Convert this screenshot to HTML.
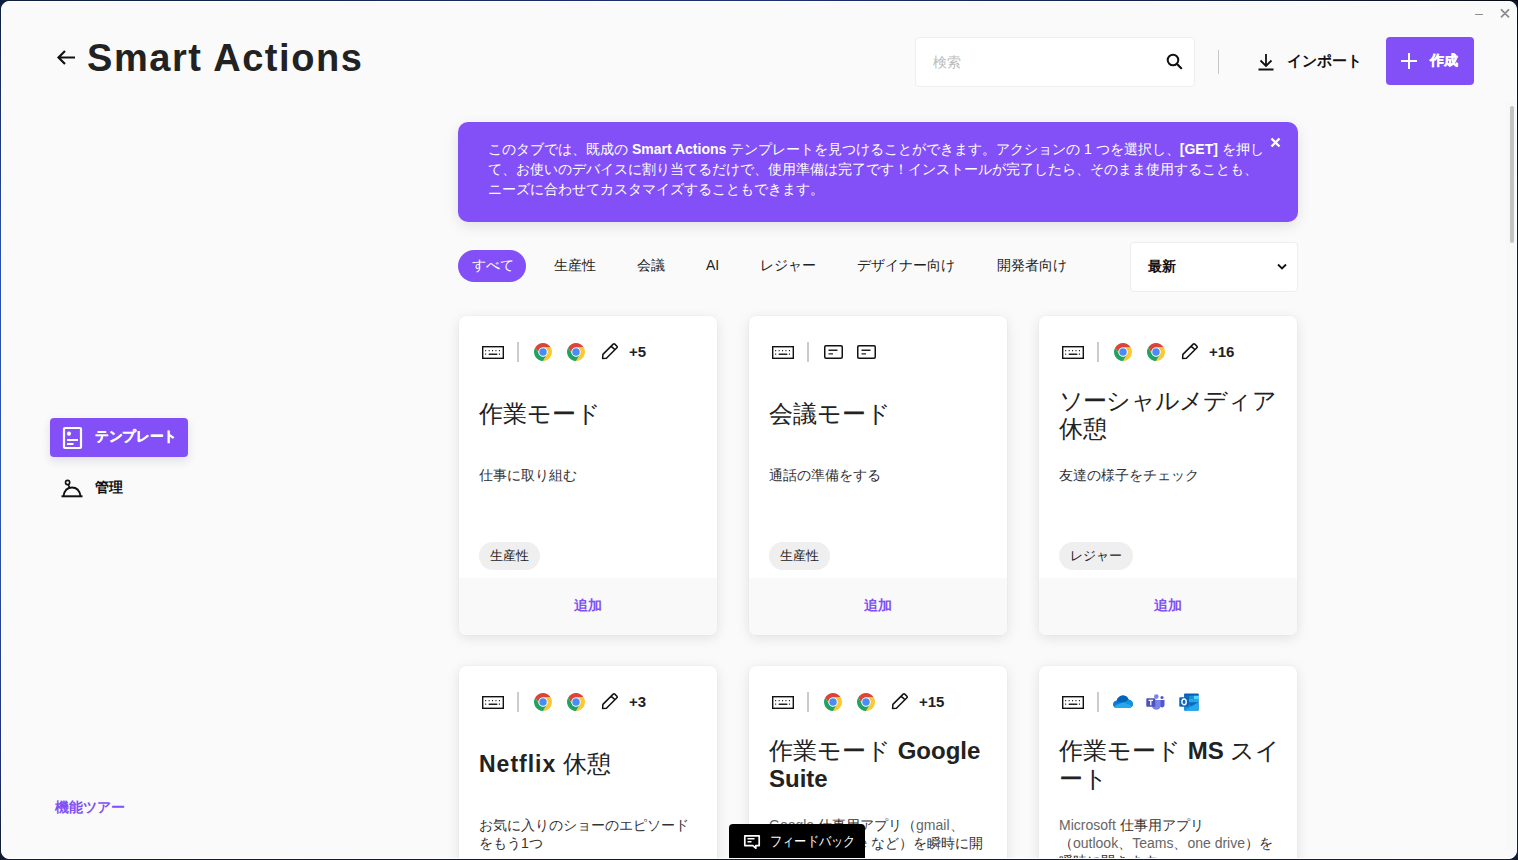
<!DOCTYPE html>
<html><head><meta charset="utf-8">
<style>
*{box-sizing:border-box;margin:0;padding:0}
html,body{width:1518px;height:860px;overflow:hidden;background:#111c38;font-family:"Liberation Sans",sans-serif;color:#222}
#bg{position:absolute;left:1px;top:1px;width:1516px;height:858px;background:#fafafa;border-radius:8px;border:1px solid #fff}
#win{position:absolute;left:0;top:0;width:1517px;height:858px;overflow:hidden}
.abs{position:absolute;white-space:nowrap}
.title{left:87px;top:36px;font-size:38px;font-weight:bold;color:#222;line-height:44px;letter-spacing:1.55px}
.search{left:915px;top:37px;width:280px;height:50px;background:#fff;border:1px solid #eeeeee;border-radius:4px}
.create{left:1386px;top:37px;width:88px;height:48px;background:#8350f8;border-radius:4px}
.banner{left:458px;top:122px;width:840px;height:100px;background:#8350f8;border-radius:10px;box-shadow:0 4px 14px rgba(0,0,0,.10)}
.btext{left:488px;top:139px;font-size:14px;line-height:20px;color:#fff}
.chip{left:458px;top:250px;width:68px;height:32px;background:#8350f8;border-radius:16px}
.ftxt{top:255px;font-size:14px;line-height:20px;color:#222}
.sort{left:1130px;top:242px;width:168px;height:50px;background:#fff;border:1px solid #eee;border-radius:4px}
.card{position:absolute;width:258px;height:319px;background:#fff;border-radius:7px;box-shadow:0 0 2px rgba(0,0,0,.05),0 3px 13px rgba(0,0,0,.10);overflow:hidden}
.card .foot{position:absolute;left:0;top:262px;width:100%;height:57px;background:#f9f9f9}
.card .add{position:absolute;left:0;top:279px;width:100%;text-align:center;font-size:14px;font-weight:bold;color:#8350f8;line-height:20px}
.card .ct{position:absolute;left:20px;top:82px;font-size:24px;line-height:28px;color:#222;white-space:nowrap}
.card .cd{position:absolute;left:20px;top:150px;font-size:14px;line-height:18px;color:#333;white-space:nowrap}
.card .tag{position:absolute;left:20px;top:226px;height:28px;padding:0 11px;border-radius:14px;background:#efefef;font-size:13px;line-height:28px;color:#222}
.lt{color:#666}
.card .icons{position:absolute;left:0;top:0;width:100%;height:60px}
.card .icons svg{position:absolute}
.card .cnt{position:absolute;top:27px;font-size:15px;font-weight:bold;line-height:18px;color:#222}
.navsel{left:50px;top:418px;width:138px;height:39px;background:#8350f8;border-radius:4px;box-shadow:0 4px 10px rgba(50,50,120,.13)}
.fb{left:729px;top:824px;width:136px;height:40px;background:#000;border-radius:4px}
</style></head><body>
<div class="abs" style="left:0;top:0;width:1518px;height:1px;background:linear-gradient(90deg,#0f1e3c,#1a2d6c 40%,#1b2f72 50%,#13204a 75%,#070b14)"></div>
<div class="abs" style="left:0;top:0;width:1px;height:860px;background:linear-gradient(180deg,#0f1e3c,#2a4fae 30%,#2c52b0 60%,#1c2f70 90%,#101828)"></div>
<div class="abs" style="left:1517px;top:0;width:1px;height:860px;background:linear-gradient(180deg,#070b14,#1a1f28 40%,#1a1f28)"></div>
<div class="abs" style="left:0;top:859px;width:1518px;height:1px;background:linear-gradient(90deg,#141a30,#16181f 40%,#1a1d2e)"></div>
<div id="bg"></div>
<div id="win">
  <!-- header -->
  <svg class="abs" style="left:56px;top:49px" width="21" height="17" viewBox="0 0 21 17"><path d="M9 2 L2.5 8.5 L9 15 M2.5 8.5 H19" fill="none" stroke="#111" stroke-width="2.2"/></svg>
  <div class="abs title">Smart Actions</div>
  <div class="abs search"></div>
  <div class="abs" style="left:933px;top:52px;font-size:14px;line-height:20px;color:#bbb">検索</div>
  <svg class="abs" style="left:1166px;top:53px" width="17" height="17" viewBox="0 0 17 17"><circle cx="7" cy="7" r="5.3" fill="none" stroke="#111" stroke-width="2"/><path d="M10.8 10.8 L15.2 15.2" stroke="#111" stroke-width="2.2" stroke-linecap="round"/></svg>
  <div class="abs" style="left:1218px;top:50px;width:1px;height:24px;background:#c6c6c6"></div>
  <svg class="abs" style="left:1257px;top:53px" width="18" height="18" viewBox="0 0 18 18"><path d="M9 1 V13 M3.5 7.5 L9 13 L14.5 7.5 M1.5 16.5 H16.5" fill="none" stroke="#111" stroke-width="1.8"/></svg>
  <div class="abs" style="left:1287px;top:51px;font-size:15px;font-weight:bold;line-height:20px;color:#111">インポート</div>
  <div class="abs create"></div>
  <svg class="abs" style="left:1401px;top:53px" width="16" height="16" viewBox="0 0 16 16"><path d="M8 0 V16 M0 8 H16" stroke="#fff" stroke-width="2"/></svg>
  <div class="abs" style="left:1430px;top:50px;font-size:14px;font-weight:bold;line-height:20px;color:#fff;-webkit-text-stroke:0.35px #fff">作成</div>
  <!-- window controls -->
  <div class="abs" style="left:1475px;top:13.5px;width:8px;height:1.6px;background:#8c8c8c;border-radius:1px"></div>
  <svg class="abs" style="left:1500px;top:8px" width="10" height="10" viewBox="0 0 10 10"><path d="M1.5 1.8 L8.5 8.8 M8.5 1.8 L1.5 8.8" stroke="#8c8c8c" stroke-width="1.8" stroke-linecap="round"/></svg>
  <!-- scrollbar -->
  <div class="abs" style="left:1506px;top:102px;width:10px;height:748px;background:#f8f8f8"></div><div class="abs" style="left:1510px;top:106px;width:4px;height:137px;background:#c4c4c4;border-radius:2px"></div>

  <!-- banner -->
  <div class="abs banner"></div>
  <div class="abs btext">このタブでは、既成の <b>Smart Actions</b> テンプレートを見つけることができます。アクションの 1 つを選択し、<b>[GET]</b> を押し<br>て、お使いのデバイスに割り当てるだけで、使用準備は完了です！インストールが完了したら、そのまま使用することも、<br>ニーズに合わせてカスタマイズすることもできます。</div>
  <svg class="abs" style="left:1270px;top:137px" width="11" height="11" viewBox="0 0 11 11"><path d="M1.5 1.5 L9.5 9.5 M9.5 1.5 L1.5 9.5" stroke="#fff" stroke-width="2.4"/></svg>

  <!-- filters -->
  <div class="abs chip"></div>
  <div class="abs ftxt" style="left:472px;color:#fff">すべて</div>
  <div class="abs ftxt" style="left:554px">生産性</div>
  <div class="abs ftxt" style="left:637px">会議</div>
  <div class="abs ftxt" style="left:706px">AI</div>
  <div class="abs ftxt" style="left:760px">レジャー</div>
  <div class="abs ftxt" style="left:857px">デザイナー向け</div>
  <div class="abs ftxt" style="left:997px">開発者向け</div>
  <div class="abs sort"></div>
  <div class="abs" style="left:1148px;top:256px;font-size:14px;font-weight:bold;line-height:20px;color:#111">最新</div>
  <svg class="abs" style="left:1277px;top:263px" width="10" height="8" viewBox="0 0 10 8"><path d="M1 1.5 L5 5.5 L9 1.5" fill="none" stroke="#111" stroke-width="1.8"/></svg>

  <!-- sidebar -->
  <div class="abs navsel"></div>
  <svg class="abs" style="left:62px;top:426px" width="21" height="24" viewBox="0 0 21 24"><rect x="2" y="2" width="17" height="20" rx="1" fill="none" stroke="#fff" stroke-width="2.2"/><circle cx="7" cy="7.7" r="2.1" fill="#fff"/><path d="M5 14 H16 M5 18 H11.5" stroke="#fff" stroke-width="1.8"/></svg>
  <div class="abs" style="left:95px;top:426px;font-size:14px;font-weight:bold;line-height:20px;color:#fff;-webkit-text-stroke:0.3px #fff;transform-origin:0 0;transform:scaleX(0.975)">テンプレート</div>
  <svg class="abs" style="left:60px;top:478px" width="24" height="20" viewBox="0 0 24 20"><circle cx="7.6" cy="4.5" r="2.1" fill="none" stroke="#111" stroke-width="1.6"/><path d="M8.3 6.6 L9.5 9.5" stroke="#111" stroke-width="1.6"/><path d="M3.5 18 C4.5 12 8 9.5 12 9.5 C16 9.5 19.5 12 20.5 18" fill="none" stroke="#111" stroke-width="1.8"/><path d="M1.5 18.3 H22.5" stroke="#111" stroke-width="2"/></svg>
  <div class="abs" style="left:95px;top:477px;font-size:14px;font-weight:bold;line-height:20px;color:#111">管理</div>
  <div class="abs" style="left:55px;top:797px;font-size:14px;font-weight:bold;line-height:20px;color:#8350f8">機能ツアー</div>

  <!-- cards -->
  <div class="card" style="left:459px;top:316px"><div class="icons"><svg style="left:23px;top:30px" width="22" height="13" viewBox="0 0 22 13"><rect x="0.7" y="0.7" width="20.6" height="11.6" fill="none" stroke="#111" stroke-width="1.4"/><path d="M3.1 4.7 h1.1 M6.6 4.7 h1.1 M10 4.7 h1.1 M13.4 4.7 h1.1 M16.9 4.7 h1.1 M3.1 8.2 h1.1 M16.9 8.2 h1.1" stroke="#222" stroke-width="1.2"/><path d="M7.2 8.2 H14.8" stroke="#222" stroke-width="1.4" stroke-linecap="round"/></svg><div style="position:absolute;left:58px;top:26px;width:2px;height:20px;background:#ccc"></div><svg style="left:75px;top:27px" width="18" height="18" viewBox="0 0 48 48"><path d="M3.22 12 A24 24 0 0 1 44.78 12 L24 12 A12 12 0 0 0 13.61 30 Z" fill="#db4437"/><path d="M44.78 12 A24 24 0 0 1 24 48 L34.39 30 A12 12 0 0 0 24 12 Z" fill="#fcc934"/><path d="M24 48 A24 24 0 0 1 3.22 12 L13.61 30 A12 12 0 0 0 34.39 30 Z" fill="#1ea362"/><circle cx="24" cy="24" r="12.2" fill="#fff"/><circle cx="24" cy="24" r="10" fill="#4b8bf5"/></svg><svg style="left:108px;top:27px" width="18" height="18" viewBox="0 0 48 48"><path d="M3.22 12 A24 24 0 0 1 44.78 12 L24 12 A12 12 0 0 0 13.61 30 Z" fill="#db4437"/><path d="M44.78 12 A24 24 0 0 1 24 48 L34.39 30 A12 12 0 0 0 24 12 Z" fill="#fcc934"/><path d="M24 48 A24 24 0 0 1 3.22 12 L13.61 30 A12 12 0 0 0 34.39 30 Z" fill="#1ea362"/><circle cx="24" cy="24" r="12.2" fill="#fff"/><circle cx="24" cy="24" r="10" fill="#4b8bf5"/></svg><svg style="left:142px;top:26px" width="18" height="18" viewBox="0 0 18 18"><path d="M1.6 16.4 L1.9 12.4 L12.2 2.1 Q13 1.3 13.8 2.1 L15.9 4.2 Q16.7 5 15.9 5.8 L5.4 16.3 Z M10.2 4.1 L13.9 7.8" fill="none" stroke="#111" stroke-width="1.5" stroke-linejoin="round"/></svg><div class="cnt" style="left:170px">+5</div></div><div class="ct" style="top:84px">作業モード</div><div class="cd">仕事に取り組む</div><div class="tag">生産性</div><div class="foot"></div><div class="add">追加</div></div>
  <div class="card" style="left:749px;top:316px"><div class="icons"><svg style="left:23px;top:30px" width="22" height="13" viewBox="0 0 22 13"><rect x="0.7" y="0.7" width="20.6" height="11.6" fill="none" stroke="#111" stroke-width="1.4"/><path d="M3.1 4.7 h1.1 M6.6 4.7 h1.1 M10 4.7 h1.1 M13.4 4.7 h1.1 M16.9 4.7 h1.1 M3.1 8.2 h1.1 M16.9 8.2 h1.1" stroke="#222" stroke-width="1.2"/><path d="M7.2 8.2 H14.8" stroke="#222" stroke-width="1.4" stroke-linecap="round"/></svg><div style="position:absolute;left:58px;top:26px;width:2px;height:20px;background:#ccc"></div><svg style="left:74.5px;top:29px" width="19" height="14" viewBox="0 0 19 14"><rect x="0.75" y="0.75" width="17.5" height="12.5" rx="1.2" fill="none" stroke="#111" stroke-width="1.5"/><path d="M4.5 5.3 H13.5 M4.5 8.9 H9" stroke="#222" stroke-width="1.4"/></svg><svg style="left:107.5px;top:29px" width="19" height="14" viewBox="0 0 19 14"><rect x="0.75" y="0.75" width="17.5" height="12.5" rx="1.2" fill="none" stroke="#111" stroke-width="1.5"/><path d="M4.5 5.3 H13.5 M4.5 8.9 H9" stroke="#222" stroke-width="1.4"/></svg></div><div class="ct" style="top:84px">会議モード</div><div class="cd">通話の準備をする</div><div class="tag">生産性</div><div class="foot"></div><div class="add">追加</div></div>
  <div class="card" style="left:1039px;top:316px"><div class="icons"><svg style="left:23px;top:30px" width="22" height="13" viewBox="0 0 22 13"><rect x="0.7" y="0.7" width="20.6" height="11.6" fill="none" stroke="#111" stroke-width="1.4"/><path d="M3.1 4.7 h1.1 M6.6 4.7 h1.1 M10 4.7 h1.1 M13.4 4.7 h1.1 M16.9 4.7 h1.1 M3.1 8.2 h1.1 M16.9 8.2 h1.1" stroke="#222" stroke-width="1.2"/><path d="M7.2 8.2 H14.8" stroke="#222" stroke-width="1.4" stroke-linecap="round"/></svg><div style="position:absolute;left:58px;top:26px;width:2px;height:20px;background:#ccc"></div><svg style="left:75px;top:27px" width="18" height="18" viewBox="0 0 48 48"><path d="M3.22 12 A24 24 0 0 1 44.78 12 L24 12 A12 12 0 0 0 13.61 30 Z" fill="#db4437"/><path d="M44.78 12 A24 24 0 0 1 24 48 L34.39 30 A12 12 0 0 0 24 12 Z" fill="#fcc934"/><path d="M24 48 A24 24 0 0 1 3.22 12 L13.61 30 A12 12 0 0 0 34.39 30 Z" fill="#1ea362"/><circle cx="24" cy="24" r="12.2" fill="#fff"/><circle cx="24" cy="24" r="10" fill="#4b8bf5"/></svg><svg style="left:108px;top:27px" width="18" height="18" viewBox="0 0 48 48"><path d="M3.22 12 A24 24 0 0 1 44.78 12 L24 12 A12 12 0 0 0 13.61 30 Z" fill="#db4437"/><path d="M44.78 12 A24 24 0 0 1 24 48 L34.39 30 A12 12 0 0 0 24 12 Z" fill="#fcc934"/><path d="M24 48 A24 24 0 0 1 3.22 12 L13.61 30 A12 12 0 0 0 34.39 30 Z" fill="#1ea362"/><circle cx="24" cy="24" r="12.2" fill="#fff"/><circle cx="24" cy="24" r="10" fill="#4b8bf5"/></svg><svg style="left:142px;top:26px" width="18" height="18" viewBox="0 0 18 18"><path d="M1.6 16.4 L1.9 12.4 L12.2 2.1 Q13 1.3 13.8 2.1 L15.9 4.2 Q16.7 5 15.9 5.8 L5.4 16.3 Z M10.2 4.1 L13.9 7.8" fill="none" stroke="#111" stroke-width="1.5" stroke-linejoin="round"/></svg><div class="cnt" style="left:170px">+16</div></div><div class="ct" style="top:71px"><span style="letter-spacing:-0.8px">ソーシャルメディア</span><br>休憩</div><div class="cd">友達の様子をチェック</div><div class="tag">レジャー</div><div class="foot"></div><div class="add">追加</div></div>
  <div class="card" style="left:459px;top:666px"><div class="icons"><svg style="left:23px;top:30px" width="22" height="13" viewBox="0 0 22 13"><rect x="0.7" y="0.7" width="20.6" height="11.6" fill="none" stroke="#111" stroke-width="1.4"/><path d="M3.1 4.7 h1.1 M6.6 4.7 h1.1 M10 4.7 h1.1 M13.4 4.7 h1.1 M16.9 4.7 h1.1 M3.1 8.2 h1.1 M16.9 8.2 h1.1" stroke="#222" stroke-width="1.2"/><path d="M7.2 8.2 H14.8" stroke="#222" stroke-width="1.4" stroke-linecap="round"/></svg><div style="position:absolute;left:58px;top:26px;width:2px;height:20px;background:#ccc"></div><svg style="left:75px;top:27px" width="18" height="18" viewBox="0 0 48 48"><path d="M3.22 12 A24 24 0 0 1 44.78 12 L24 12 A12 12 0 0 0 13.61 30 Z" fill="#db4437"/><path d="M44.78 12 A24 24 0 0 1 24 48 L34.39 30 A12 12 0 0 0 24 12 Z" fill="#fcc934"/><path d="M24 48 A24 24 0 0 1 3.22 12 L13.61 30 A12 12 0 0 0 34.39 30 Z" fill="#1ea362"/><circle cx="24" cy="24" r="12.2" fill="#fff"/><circle cx="24" cy="24" r="10" fill="#4b8bf5"/></svg><svg style="left:108px;top:27px" width="18" height="18" viewBox="0 0 48 48"><path d="M3.22 12 A24 24 0 0 1 44.78 12 L24 12 A12 12 0 0 0 13.61 30 Z" fill="#db4437"/><path d="M44.78 12 A24 24 0 0 1 24 48 L34.39 30 A12 12 0 0 0 24 12 Z" fill="#fcc934"/><path d="M24 48 A24 24 0 0 1 3.22 12 L13.61 30 A12 12 0 0 0 34.39 30 Z" fill="#1ea362"/><circle cx="24" cy="24" r="12.2" fill="#fff"/><circle cx="24" cy="24" r="10" fill="#4b8bf5"/></svg><svg style="left:142px;top:26px" width="18" height="18" viewBox="0 0 18 18"><path d="M1.6 16.4 L1.9 12.4 L12.2 2.1 Q13 1.3 13.8 2.1 L15.9 4.2 Q16.7 5 15.9 5.8 L5.4 16.3 Z M10.2 4.1 L13.9 7.8" fill="none" stroke="#111" stroke-width="1.5" stroke-linejoin="round"/></svg><div class="cnt" style="left:170px">+3</div></div><div class="ct" style="top:84px"><b style="letter-spacing:1px;font-size:23px">Netflix</b> 休憩</div><div class="cd">お気に入りのショーのエピソード<br>をもう1つ</div></div>
  <div class="card" style="left:749px;top:666px"><div class="icons"><svg style="left:23px;top:30px" width="22" height="13" viewBox="0 0 22 13"><rect x="0.7" y="0.7" width="20.6" height="11.6" fill="none" stroke="#111" stroke-width="1.4"/><path d="M3.1 4.7 h1.1 M6.6 4.7 h1.1 M10 4.7 h1.1 M13.4 4.7 h1.1 M16.9 4.7 h1.1 M3.1 8.2 h1.1 M16.9 8.2 h1.1" stroke="#222" stroke-width="1.2"/><path d="M7.2 8.2 H14.8" stroke="#222" stroke-width="1.4" stroke-linecap="round"/></svg><div style="position:absolute;left:58px;top:26px;width:2px;height:20px;background:#ccc"></div><svg style="left:75px;top:27px" width="18" height="18" viewBox="0 0 48 48"><path d="M3.22 12 A24 24 0 0 1 44.78 12 L24 12 A12 12 0 0 0 13.61 30 Z" fill="#db4437"/><path d="M44.78 12 A24 24 0 0 1 24 48 L34.39 30 A12 12 0 0 0 24 12 Z" fill="#fcc934"/><path d="M24 48 A24 24 0 0 1 3.22 12 L13.61 30 A12 12 0 0 0 34.39 30 Z" fill="#1ea362"/><circle cx="24" cy="24" r="12.2" fill="#fff"/><circle cx="24" cy="24" r="10" fill="#4b8bf5"/></svg><svg style="left:108px;top:27px" width="18" height="18" viewBox="0 0 48 48"><path d="M3.22 12 A24 24 0 0 1 44.78 12 L24 12 A12 12 0 0 0 13.61 30 Z" fill="#db4437"/><path d="M44.78 12 A24 24 0 0 1 24 48 L34.39 30 A12 12 0 0 0 24 12 Z" fill="#fcc934"/><path d="M24 48 A24 24 0 0 1 3.22 12 L13.61 30 A12 12 0 0 0 34.39 30 Z" fill="#1ea362"/><circle cx="24" cy="24" r="12.2" fill="#fff"/><circle cx="24" cy="24" r="10" fill="#4b8bf5"/></svg><svg style="left:142px;top:26px" width="18" height="18" viewBox="0 0 18 18"><path d="M1.6 16.4 L1.9 12.4 L12.2 2.1 Q13 1.3 13.8 2.1 L15.9 4.2 Q16.7 5 15.9 5.8 L5.4 16.3 Z M10.2 4.1 L13.9 7.8" fill="none" stroke="#111" stroke-width="1.5" stroke-linejoin="round"/></svg><div class="cnt" style="left:170px">+15</div></div><div class="ct" style="top:71px">作業モード <b>Google</b><br><b>Suite</b></div><div class="cd"><span class="lt">Google</span> 仕事用アプリ（<span class="lt">gmail</span>、<br><span class="lt">calendar</span>、<span class="lt">drive</span> など）を瞬時に開</div></div>
  <div class="card" style="left:1039px;top:666px"><div class="icons"><svg style="left:23px;top:30px" width="22" height="13" viewBox="0 0 22 13"><rect x="0.7" y="0.7" width="20.6" height="11.6" fill="none" stroke="#111" stroke-width="1.4"/><path d="M3.1 4.7 h1.1 M6.6 4.7 h1.1 M10 4.7 h1.1 M13.4 4.7 h1.1 M16.9 4.7 h1.1 M3.1 8.2 h1.1 M16.9 8.2 h1.1" stroke="#222" stroke-width="1.2"/><path d="M7.2 8.2 H14.8" stroke="#222" stroke-width="1.4" stroke-linecap="round"/></svg><div style="position:absolute;left:58px;top:26px;width:2px;height:20px;background:#ccc"></div><svg style="left:74px;top:29px" width="20" height="13" viewBox="0 0 20 13"><defs><clipPath id="odc"><path d="M4 13 C1.6 13 0 11.4 0 9.4 C0 7.3 1.6 5.8 3.6 5.7 C4.5 2.5 7.1 0.5 10 0.5 C12.7 0.5 14.7 2.1 15.6 4.4 C18.1 4.6 20 6.6 20 9.1 C20 11.3 18.3 13 16.1 13 Z"/></clipPath></defs><g clip-path="url(#odc)"><rect width="20" height="13" fill="#0f78d4"/><path d="M3 6 C4 2 7 0 10 0 C13 0 15 2 16 4.5 L10 8 Z" fill="#0364b8"/><path d="M10 8 L16 4.5 L20 6 V13 H10 Z" fill="#1490df"/><path d="M0 13 L3 10 L10 7.2 L17 10 L20 13 Z" fill="#28a8ea"/></g></svg><svg style="left:107px;top:28px" width="19" height="16" viewBox="0 0 19 16"><circle cx="10.3" cy="2.6" r="2.3" fill="#7b83eb"/><circle cx="16" cy="3.5" r="1.6" fill="#5059c9"/><path d="M13.5 6 H18.5 V11 C18.5 12.6 17.3 13.5 16 13.5 C14.7 13.5 13.5 12.6 13.5 11 Z" fill="#5059c9"/><path d="M6 6 H14.5 V12 C14.5 14.3 12.6 15.8 10.3 15.8 C8 15.8 6 14.3 6 12 Z" fill="#7b83eb"/><rect x="0.3" y="4.3" width="9" height="8.4" rx="0.6" fill="#4b53bc"/><path d="M2.6 6.4 H7 M4.8 6.4 V11.2" stroke="#fff" stroke-width="1.3"/></svg><svg style="left:139.5px;top:26.5px" width="20" height="18.2" viewBox="0 0 21 19"><rect x="5.5" y="1" width="15" height="17" fill="#0f6cbd"/><rect x="5.5" y="0.5" width="15" height="2.6" rx="0.8" fill="#0a5fb4"/><rect x="5.5" y="2.8" width="5" height="3.4" fill="#0f6cbd"/><rect x="10.5" y="2.8" width="5" height="3.4" fill="#1490df"/><rect x="15.5" y="2.8" width="5" height="3.4" fill="#50d9ff"/><rect x="5.5" y="6.2" width="5" height="3.4" fill="#0f6cbd"/><rect x="10.5" y="6.2" width="5" height="3.4" fill="#28a8ea"/><rect x="15.5" y="6.2" width="5" height="3.4" fill="#28a8ea"/><path d="M5.5 9.6 L13 13.5 L20.5 9.6 V17.8 Q20.5 18.5 19.8 18.5 H6.2 Q5.5 18.5 5.5 17.8 Z" fill="#1490df"/><path d="M5.5 18.5 L20.5 10 V17.8 Q20.5 18.5 19.8 18.5 Z" fill="#28a8ea"/><rect x="0.3" y="4.3" width="10" height="10" rx="0.8" fill="#0a64c2"/><ellipse cx="5.3" cy="9.3" rx="2.3" ry="3" fill="none" stroke="#fff" stroke-width="1.5"/></svg></div><div class="ct" style="top:71px">作業モード <b>MS</b> スイ<br>ート</div><div class="cd"><span class="lt">Microsoft</span> 仕事用アプリ<br>（<span class="lt">outlook</span>、<span class="lt">Teams</span>、<span class="lt">one drive</span>）を<br>瞬時に開きます</div></div>

  <!-- feedback -->
  <div class="abs fb"></div>
  <svg class="abs" style="left:743px;top:833px" width="18" height="17" viewBox="0 0 18 17"><path d="M1.8 2.8 H16.2 V12.6 H12.8 V15.2 L9.8 12.6 H1.8 Z" fill="none" stroke="#fff" stroke-width="1.7" stroke-linejoin="round"/><path d="M4.5 5.8 H11.5 M4.5 8.8 H8.5" stroke="#fff" stroke-width="1.5"/></svg>
  <div class="abs" style="left:770px;top:831px;font-size:14px;line-height:20px;color:#fff;transform-origin:0 0;transform:scaleX(0.87)">フィードバック</div>
</div>
</body></html>
